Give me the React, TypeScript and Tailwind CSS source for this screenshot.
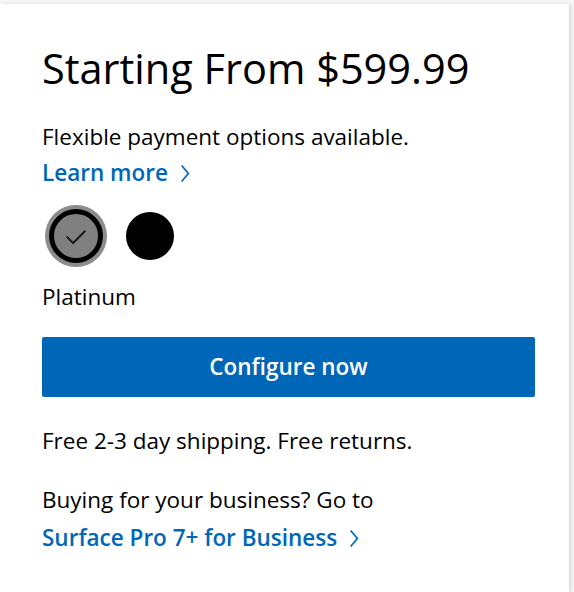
import React from "react";

const Chevron = ({ className = "" }: { className?: string }) => (
  <svg viewBox="0 0 10 20" className={className} fill="none" stroke="currentColor" strokeWidth="1.8">
    <path d="M1.5 1.5 L8.5 10 L1.5 18.5" />
  </svg>
);

export default function App() {
  return (
    <div className="w-[574px] h-[592px] bg-[#f7f7f7] pt-[4px]" style={{ fontFamily: '"Open Sans", "Noto Sans", sans-serif' }}>
      <div className="w-[569px] h-[588px] bg-white shadow-[2px_0_4px_rgba(0,0,0,0.12)] pl-[42px] pt-[38px] text-black">
        <h1 className="text-[41.5px] leading-[52px] font-normal">Starting From $599.99</h1>
        <p className="mt-[28px] text-[22.5px] leading-[30px]">Flexible payment options available.</p>
        <a className="mt-[6px] flex items-center gap-[12px] text-[22.5px] leading-[30px] font-semibold text-[#0067b8]">
          Learn more <Chevron className="w-[10px] h-[19px]" />
        </a>
        <div className="mt-[17px] ml-[3px] flex items-center gap-[19px]">
          <div className="w-[62px] h-[62px] rounded-full bg-[#8c8c8c] flex items-center justify-center">
            <div className="w-[54px] h-[54px] rounded-full border-[5px] border-black bg-[#808080] flex items-center justify-center">
              <svg viewBox="0 0 24 24" className="w-[28px] h-[28px]" fill="none" stroke="#1a1a1a" strokeWidth="1.7">
                <path d="M4 12.5 L9.5 18 L20 7.5" />
              </svg>
            </div>
          </div>
          <div className="w-[48px] h-[48px] rounded-full bg-black" />
        </div>
        <p className="mt-[15px] text-[22.5px] leading-[30px]">Platinum</p>
        <button className="mt-[25px] w-[493px] h-[60px] rounded-[2px] bg-[#0067b8] text-white text-[22.5px] font-semibold">
          Configure now
        </button>
        <p className="mt-[29px] text-[22.5px] leading-[30px]">Free 2-3 day shipping. Free returns.</p>
        <p className="mt-[29px] text-[22.5px] leading-[30px]">Buying for your business? Go to</p>
        <a className="mt-[8px] flex items-center gap-[12px] text-[22.5px] leading-[30px] font-semibold text-[#0067b8]">
          Surface Pro 7+ for Business <Chevron className="w-[10px] h-[19px]" />
        </a>
      </div>
    </div>
  );
}
